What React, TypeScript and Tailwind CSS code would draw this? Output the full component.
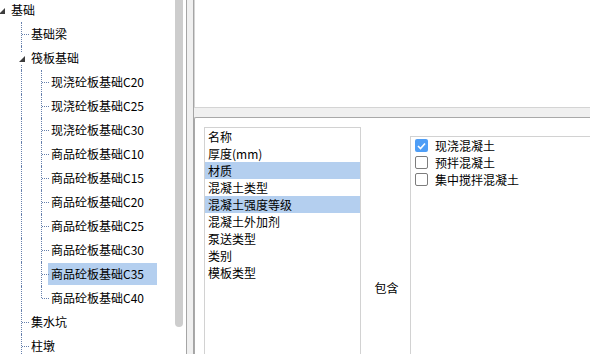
import * as React from "react"

interface TreeRow {
  level: number
  label: string
  expandable?: boolean
  last?: boolean
  selected?: boolean
}

const rows: TreeRow[] = [
  { level: 0, label: "基础", expandable: true },
  { level: 1, label: "基础梁" },
  { level: 1, label: "筏板基础", expandable: true },
  { level: 2, label: "现浇砼板基础C20" },
  { level: 2, label: "现浇砼板基础C25" },
  { level: 2, label: "现浇砼板基础C30" },
  { level: 2, label: "商品砼板基础C10" },
  { level: 2, label: "商品砼板基础C15" },
  { level: 2, label: "商品砼板基础C20" },
  { level: 2, label: "商品砼板基础C25" },
  { level: 2, label: "商品砼板基础C30" },
  { level: 2, label: "商品砼板基础C35", selected: true },
  { level: 2, label: "商品砼板基础C40", last: true },
  { level: 1, label: "集水坑" },
  { level: 1, label: "柱墩" },
]

const props = [
  { label: "名称" },
  { label: "厚度(mm)" },
  { label: "材质", selected: true },
  { label: "混凝土类型" },
  { label: "混凝土强度等级", selected: true },
  { label: "混凝土外加剂" },
  { label: "泵送类型" },
  { label: "类别" },
  { label: "模板类型" },
]

const options = [
  { label: "现浇混凝土", checked: true },
  { label: "预拌混凝土" },
  { label: "集中搅拌混凝土" },
]

const font = { fontFamily: '"Noto Sans CJK SC", "Noto Sans", sans-serif' }

function Triangle() {
  return (
    <svg width="6" height="6" viewBox="0 0 6 6" className="block">
      <polygon points="6,0 6,6 0,6" fill="#3c3c3c" />
    </svg>
  )
}

function GuideCell({ kind, lastChild }: { kind: "pass" | "own" | "expand" | "none"; lastChild?: boolean }) {
  return (
    <div className="relative w-[20px] h-[24px] shrink-0">
      {kind === "pass" && (
        <div className="absolute left-[10px] top-0 h-[24px] border-l border-dotted border-[#6680ad]" />
      )}
      {kind === "own" && (
        <>
          <div
            className={
              lastChild
                ? "absolute left-[10px] top-0 h-[12px] border-l border-dotted border-[#6680ad]"
                : "absolute left-[10px] top-0 h-[24px] border-l border-dotted border-[#6680ad]"
            }
          />
          <div className="absolute left-[11px] top-[12px] w-[7px] border-t border-dotted border-[#6680ad]" />
        </>
      )}
      {kind === "expand" && (
        <div className="absolute left-[6px] top-[7px] w-[9px] h-[11px] bg-white flex items-center justify-center">
          <Triangle />
        </div>
      )}
    </div>
  )
}

function Tree() {
  return (
    <div className="-ml-[9px] -mt-[2px] flex flex-col" style={font}>
      {rows.map((r, idx) => {
        const cells: React.ReactNode[] = []
        for (let j = 0; j < r.level; j++) {
          cells.push(<GuideCell key={j} kind={j === 0 ? "none" : "pass"} />)
        }
        if (r.expandable) {
          cells.push(
            <div key="own" className="relative w-[20px] h-[24px] shrink-0">
              {r.level > 0 && (
                <div className="absolute left-[10px] top-0 h-[24px] border-l border-dotted border-[#6680ad]" />
              )}
              <div className="absolute left-[6px] top-[7px] w-[9px] h-[11px] bg-white flex items-center justify-center">
                <Triangle />
              </div>
            </div>
          )
        } else {
          cells.push(<GuideCell key="own" kind="own" lastChild={r.last} />)
        }
        return (
          <div key={idx} className="flex items-center h-[24px] whitespace-nowrap">
            {cells}
            <div
              className={
                r.selected
                  ? "h-[22px] flex items-center -ml-[3px] pl-[3px] pr-[13px] bg-[#b4cfef] text-[12px] text-black"
                  : "h-[22px] flex items-center -ml-[3px] pl-[3px] pr-[13px] text-[12px] text-black"
              }
            >
              {r.label}
            </div>
          </div>
        )
      })}
    </div>
  )
}

function CheckBox({ checked }: { checked?: boolean }) {
  if (checked) {
    return (
      <div className="w-[13px] h-[13px] rounded-[2px] bg-[#4f9ef6] flex items-center justify-center shrink-0">
        <svg width="9" height="8" viewBox="0 0 9 8">
          <polyline points="1,4 3.5,6.5 8,1.5" fill="none" stroke="white" strokeWidth="1.6" />
        </svg>
      </div>
    )
  }
  return <div className="w-[13px] h-[13px] rounded-[2px] border border-[#7d7d7d] bg-white shrink-0" />
}

export default function App() {
  return (
    <div className="w-[590px] h-[354px] overflow-hidden flex bg-white" style={font}>
      {/* left tree */}
      <div className="w-[186px] flex shrink-0">
        <div className="w-[170px] overflow-hidden">
          <Tree />
        </div>
        <div className="w-[16px] bg-white">
          <div className="ml-[5px] w-[8px] h-[327px] bg-[#cdcdcd] rounded-b-[4px]" />
        </div>
      </div>

      {/* splitter */}
      <div className="w-[8px] shrink-0 bg-[#f0f0f0] border-l border-r border-[#a5a5a5]" />

      {/* right */}
      <div className="flex-1 flex flex-col bg-[#f0f0f0]">
        <div className="h-[108px] bg-white border-l border-b border-[#d4d4d4] shrink-0" />
        <div className="h-[9px] shrink-0" />
        <div className="flex-1 flex bg-white border-l border-t border-[#a9a9a9] rounded-tl-[2px] pl-[9px] pt-[9px]">
          <div className="w-[157px] h-[300px] border border-[#d2d2d2] flex flex-col shrink-0">
            {props.map((p) => (
              <div
                key={p.label}
                className={
                  p.selected
                    ? "h-[17px] flex items-center pl-[3px] text-[12px] text-black bg-[#b4cfef] whitespace-nowrap"
                    : "h-[17px] flex items-center pl-[3px] text-[12px] text-black whitespace-nowrap"
                }
              >
                {p.label}
              </div>
            ))}
          </div>
          <div className="w-[49px] shrink-0 pt-[152px] flex justify-center">
            <span className="text-[12px] leading-[17px] text-black pl-[2px]">包含</span>
          </div>
          <div className="flex-1 mt-[9px] h-[300px] border-l border-t border-[#d2d2d2] flex flex-col">
            {options.map((o) => (
              <div key={o.label} className="h-[17px] flex items-center pl-[4px] gap-[7px] whitespace-nowrap">
                <CheckBox checked={o.checked} />
                <span className="text-[12px] text-black">{o.label}</span>
              </div>
            ))}
          </div>
        </div>
      </div>
    </div>
  )
}
